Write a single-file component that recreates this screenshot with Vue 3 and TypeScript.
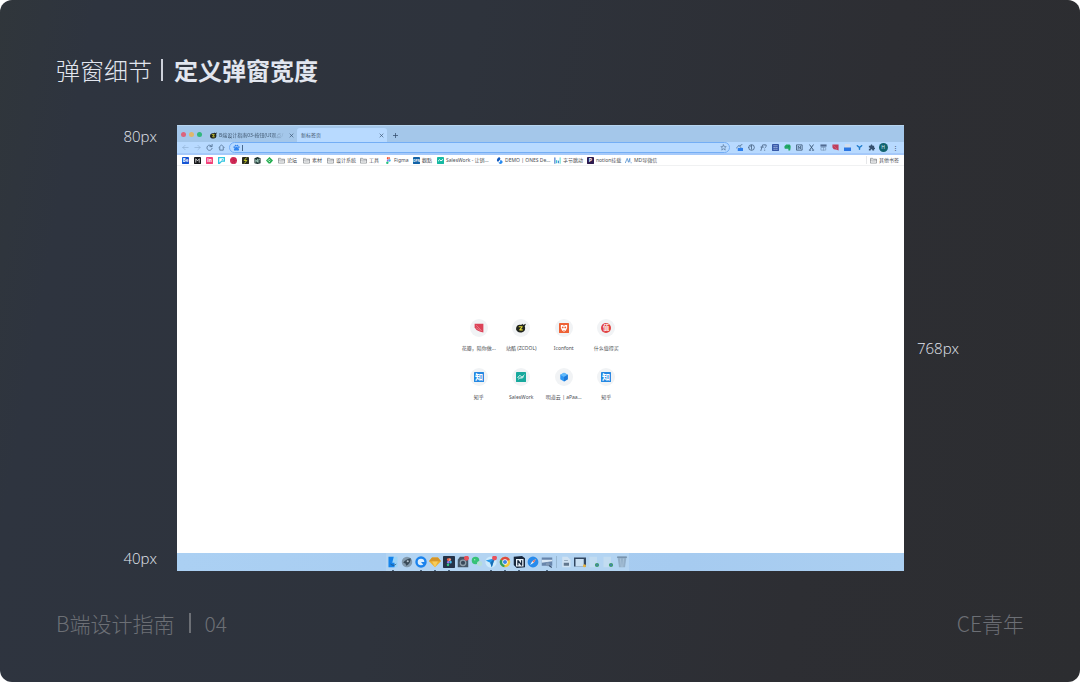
<script setup lang="ts">
import { h, ref } from 'vue'

interface Shape {
  d?: string
  fill?: string
  line?: string
  w?: number
  text?: string
  size?: number
}
type Art = Shape[]

const fillOf = (d: string, fill: string): Shape => ({ d, fill })
const lineOf = (d: string, line: string, w = 1.6): Shape => ({ d, line, w })
const box = (fill: string): Shape => fillOf('M1 0h14a1 1 0 0 1 1 1v14a1 1 0 0 1-1 1H1a1 1 0 0 1-1-1V1a1 1 0 0 1 1-1z', fill)
const disc = (fill: string, r = 8, cx = 8, cy = 8): Shape =>
  fillOf(`M${cx - r} ${cy}a${r} ${r} 0 1 0 ${2 * r} 0a${r} ${r} 0 1 0 ${-2 * r} 0z`, fill)
const word = (text: string, fill: string, size: number): Shape => ({ text, fill, size })

const Glyph = (props: { art: Art }) =>
  h(
    'svg',
    { viewBox: '0 0 16 16', 'aria-hidden': 'true' },
    props.art.map((s) =>
      s.text
        ? h('text', { x: 8, y: 8 + (s.size ?? 10) * 0.37, 'text-anchor': 'middle', 'font-size': s.size, 'font-weight': 700, fill: s.fill }, s.text)
        : h('path', {
            d: s.d,
            fill: s.fill ?? 'none',
            stroke: s.line ?? 'none',
            'stroke-width': s.w ?? 0,
            'stroke-linecap': 'round',
            'stroke-linejoin': 'round',
          }),
    ),
  )
Glyph.props = ['art']

const ink = '#4d6b8c'
const navy = '#35506f'

const zcool: Art = [
  fillOf('M0 10C0 4 4 2 8 3l3-2v2l5-2-2 4c2 6-1 10-7 10-4 0-6-2-7-5z', '#20241d'),
  lineOf('M5 6h5l-4 5h4', '#e5dc37', 1.8),
]
const back: Art = [lineOf('M14 8H2M7 3L2 8l5 5', '#8fb0d3', 1.5)]
const forward: Art = [lineOf('M2 8h12M9 3l5 5-5 5', '#8fb0d3', 1.5)]
const reload: Art = [lineOf('M13 5a6 6 0 1 0 1 5M14 1v5H9', ink, 1.8)]
const home: Art = [lineOf('M2 8l6-6 6 6M4 8v6h8V8', ink, 1.8)]
const star: Art = [lineOf('M8 2l2 4h4l-3 3 1 5-4-3-4 3 1-5-3-3h4z', ink, 1.3)]
const paw: Art = [
  disc('#2f83ef', 2, 2.8, 7), disc('#2f83ef', 2, 6, 3.5), disc('#2f83ef', 2, 10.2, 3.5), disc('#2f83ef', 2, 13.3, 7),
  fillOf('M8 6c3 0 3 3 5 4 2 3 0 6-3 5H6c-4 1-5-3-3-5 2-1 2-4 5-4z', '#2f83ef'),
]
const folder: Art = [
  lineOf('M1 13V3h5l2 2h7v8zM1 7h14', '#777b80', 1.5),
  lineOf('M4 10h8', '#a5a8ac', 1.2),
]
const close: Art = [lineOf('M3 3l10 10M13 3L3 13', '#344e6c', 2)]
const plus: Art = [lineOf('M8 1v14M1 8h14', '#344e6c', 2.4)]

interface Entry { name: string; label?: string; art: Art }

const bookmarks: Entry[] = [
  { name: 'Be', art: [box('#1756d4'), word('Be', '#fff', 10)] },
  { name: 'M', art: [box('#15171a'), lineOf('M4 12V4l4 5 4-5v8', '#fff', 1.6)] },
  { name: 'in', art: [box('#f2427a'), word('in', '#fff', 11)] },
  { name: 'P', art: [fillOf('M0 0h16v11H9l-5 5H0z', '#31c5df'), fillOf('M3 3h10v5H8l-4 4H3z', '#fff'), disc('#31c5df', 1.5, 10, 6)] },
  { name: 'Dribbble', art: [disc('#d52e5b'), lineOf('M2 6c5 1 9-1 11-3M5 15c1-6 5-8 10-7M5 1c4 4 5 8 6 14', '#ae173e', 1)] },
  { name: 'Z', art: [box('#282b20'), lineOf('M10 2L5 8h6l-5 6', '#e3e72c', 2)] },
  { name: 'N', art: [fillOf('M1 3L8 0l7 3v11l-7 2-7-2z', '#172e2c'), lineOf('M4 12V6l4 6V5M11 12V5h2', '#c7f4e2', 1.6)] },
  { name: 'Feedly', art: [fillOf('M8 0l8 8-6 7H6L0 8z', '#23ae50'), lineOf('M5 8l3-3M7 11l2-2', '#fff', 2)] },
  { name: '论坛', label: '论坛', art: folder },
  { name: '素材', label: '素材', art: folder },
  { name: '设计系统', label: '设计系统', art: folder },
  { name: '工具', label: '工具', art: folder },
  {
    name: 'Figma', label: 'Figma',
    art: [
      fillOf('M8 0H6a3 3 0 0 0 0 5.5h2z', '#ef4e2d'), fillOf('M8 0h2a3 3 0 0 1 0 5.5H8z', '#f77b65'),
      fillOf('M8 5.5H6a2.6 2.6 0 0 0 0 5h2z', '#9b58ed'), disc('#32b8ee', 2.6, 10.6, 8), fillOf('M8 10.5H6a2.7 2.7 0 1 0 2 3z', '#27c581'),
    ],
  },
  { name: '觀點', label: '觀點', art: [box('#1262a6'), word('OPN', '#fff', 7)] },
  { name: 'SalesWork', label: 'SalesWork - 让销...', art: [box('#17b9a3'), lineOf('M3 9l3-3 3 3 4-3', '#fff', 2.2)] },
  { name: 'ONES', label: 'DEMO | ONES De...', art: [fillOf('M7 0c3 2 4 4 2 6L5 11C0 9 2 4 7 0z', '#1158bd'), fillOf('M10 7c5 1 7 5 3 8-3 2-7 0-7-3h3z', '#268af1')] },
  { name: '字节跳动', label: '字节跳动', art: [lineOf('M2 2v12', '#3670c8', 2.5), lineOf('M6 8v5', '#2fc4d0', 2.5), lineOf('M10 9v4', '#3480d5', 2.5), lineOf('M14 2v12', '#61dcd6', 2.5)] },
  { name: 'notion', label: 'notion挂载', art: [box('#2d1b4e'), word('P', '#fff', 12)] },
  { name: 'MD', label: 'MD导微信', art: [lineOf('M1 13L5 3l3 9 3-9v8', '#3c82cc', 1.6), disc('#3c82cc', 1.2, 14, 13)] },
]

const extensions: Entry[] = [
  { name: '翻译', art: [lineOf('M1 9l6-6 4 5M9 4l5-3', ink, 1.8), fillOf('M4 9h12v7H4z', '#2e7fec')] },
  { name: '信息', art: [lineOf('M1.5 8a6.5 6.5 0 1 0 13 0a6.5 6.5 0 1 0-13 0M8 4v8M6 5l2-1', navy, 1.6)] },
  { name: '字体', art: [lineOf('M2 15L6 2h3M2 7h6M10 2h4v4l-3 3M10 14h1', navy, 1.5)] },
  { name: '列表', art: [box('#3759a8'), lineOf('M4 4h8M4 8h3M9 8h3M4 12h3M9 12h3', '#b7caed', 1.5)] },
  { name: '印象笔记', art: [fillOf('M1 5l4-4h6c5 0 5 5 3 14h-4v-4H4C1 11 1 9 1 5z', '#20a765'), disc('#165e4a', 1, 11, 6)] },
  { name: '截图', art: [lineOf('M2 2h12v12H2z', navy, 1.8), lineOf('M5 11V5l5 6V5', navy, 1.8)] },
  { name: '剪藏', art: [lineOf('M4 2l7 10M12 2L5 12M3 14h3M10 14h3', navy, 2)] },
  { name: '日历', art: [fillOf('M1 1h14v5H1z', '#526c92'), lineOf('M3 8h10v6H3zM8 8v6', '#7591b1', 1.4)] },
  { name: '花瓣', art: [fillOf('M1 1h14v14l-4-2-7-1-3-4z', '#bf3d5b'), lineOf('M4 4l7 7', '#d77f95', 1)] },
  { name: '清单', art: [fillOf('M2 0h12v9H2z', '#d2dceb'), fillOf('M0 8h16v8H0z', '#2b76e3')] },
  { name: '筛选', art: [lineOf('M3 4l5 4 5-4M8 8v4', '#1f7bca', 3.4)] },
  { name: '扩展程序', art: [fillOf('M2 4h4c-1-4 5-4 4 0h4v4c3 0 3 4 0 4v3h-4c0-4-4-4-4 0H2v-4c4 0 4-3 0-3z', navy)] },
]

const tabTitle = 'B端设计指南03-按钮(UI观点/'

const shortcuts: Entry[] = [
  { name: '花瓣', label: '花瓣，陪你做...', art: [fillOf('M1 1h14v14l-5-1-6-3-3-4z', '#dc4358'), lineOf('M4 4l8 8M4 8l6 4', '#ee9aa2', 1)] },
  { name: '站酷', label: '站酷 (ZCOOL)', art: zcool },
  {
    name: 'Iconfont', label: 'Iconfont',
    art: [box('#ee6135'), fillOf('M3 3h10v5l-2 4-3 2-3-2-2-4z', '#fff'), disc('#ee6135', 1.5, 6, 7), disc('#ee6135', 1.5, 10, 7), fillOf('M6 2h4L8 5zM6 11h4v1H6z', '#ee6135')],
  },
  { name: '什么值得买', label: '什么值得买', art: [disc('#e14040'), word('值', '#fff', 10)] },
  { name: '知乎', label: '知乎', art: [box('#2588e2'), word('知', '#fff', 13)] },
  { name: 'SalesWork', label: 'SalesWork', art: [box('#18a99d'), lineOf('M3 9c2-4 4-4 5-2s3 0 5-2M4 11c3-4 5 1 8-3', '#fff', 1.6)] },
  { name: '明道云', label: '明道云 | aPaa...', art: [fillOf('M8 1l6 3.5v7L8 15l-6-3.5v-7z', '#2e96f3'), fillOf('M8 1l6 3.5L8 8 2 4.5z', '#64bbfb'), fillOf('M8 8l6-3.5v7L8 15z', '#1d79d8')] },
  { name: '知乎专栏', label: '知乎', art: [box('#2588e2'), word('知', '#fff', 13)] },
]

const chromeArt: Art = [disc('#f0c83d', 7), fillOf('M8 8L2 4.5A7 7 0 0 1 14.5 5z', '#db4a3f'), fillOf('M8 8l-6-3.5A7 7 0 0 0 7 15z', '#2c9f60'), disc('#fff', 3.6), disc('#3e83e8', 2.7)]
const pageFile: Art = [fillOf('M2 1h10v14H2z', '#c2dcf1'), disc('#3a9c68', 2.8, 12, 12), disc('#487fbb', 1.3, 12, 12)]

interface DockItem { name: string; running?: boolean; art: Art }
const dock: DockItem[] = [
  { name: '访达', running: true, art: [fillOf('M2 1h12v14H2z', '#9bd3f7'), fillOf('M2 1h7L7 9h3v6H2z', '#1684eb'), lineOf('M5 11c2 2 5 2 7 0', '#17415f', 0.8)] },
  { name: '启动台', art: [disc('#8299ac', 7), fillOf('M13 3c-4 0-8 3-10 6l3 1 1 3c4-2 6-5 6-10z', '#394a57'), disc('#b4c2cd', 1.4, 9, 7)] },
  { name: 'Quark', running: true, art: [disc('#1b83ed', 7.6), disc('#d9edfe', 4.4), fillOf('M8 8h6l-1 6z', '#1b83ed')] },
  { name: 'Sketch', running: true, art: [fillOf('M4 2h8l4 5-8 8-8-8z', '#edb02e'), fillOf('M4 7h8l-4 8z', '#f7cc5b'), fillOf('M4 2h8l4 5H0z', '#d59529')] },
  {
    name: 'Figma', running: true,
    art: [box('#243348'), fillOf('M8 3H6.5a1.8 1.8 0 0 0 0 3.5H8z', '#ee6548'), fillOf('M8 3h1.5a1.8 1.8 0 0 1 0 3.5H8z', '#f59a81'), fillOf('M8 6.5H6.5a1.8 1.8 0 0 0 0 3.5H8z', '#9b72e9'), disc('#44b9ed', 1.7, 10, 8.2), disc('#37c582', 1.7, 6.7, 11.8)],
  },
  { name: '设置', art: [fillOf('M4 1h7l4 5v9H1V5z', '#455768'), disc('#8e9da9', 4.5, 8, 9), disc('#38495a', 2.8, 8, 9), disc('#e8525c', 3.3, 12.7, 3)] },
  { name: '微信', art: [disc('#35c276', 5, 6, 6), disc('#b5ddd8', 3.5, 11.5, 10), disc('#eafff4', 0.8, 5, 5)] },
  { name: '飞书', running: true, art: [disc('#cde9fb', 7.5), fillOf('M1 6l12-3-4 12-2-6z', '#2597e9'), fillOf('M7 9l6-6-4 12z', '#176bb4'), disc('#e8525c', 3.3, 12.7, 2.8)] },
  { name: 'Chrome', running: true, art: chromeArt },
  { name: 'Notion', running: true, art: [fillOf('M1 1l11-1 4 3v12l-11 1-4-4z', '#17263b'), fillOf('M4 4h10v10H4z', '#e8f2fa'), lineOf('M6.5 12V6l5 6V6', '#17263b', 1.6)] },
  { name: 'Safari', art: [disc('#288bec', 7.2), fillOf('M12 4L9 9 4 12l3-5z', '#e6f5ff'), fillOf('M12 4L9 9 7 7z', '#ed735e')] },
  { name: '预览', running: true, art: [fillOf('M1 2h14v11H1z', '#6785ab'), fillOf('M1 5h14v2L1 9z', '#d8e7f5'), disc('#8098b6', 2.6, 9, 11), lineOf('M11 13l3 2', '#3a5270', 1.4)] },
]
const dockFiles: DockItem[] = [
  { name: '文稿', art: [fillOf('M3 1h7l4 4v10H3z', '#cfe2f3'), fillOf('M5 9h7v4H5z', '#61778e'), lineOf('M6 6h4', '#8498ab', 1)] },
  { name: '屏幕', art: [fillOf('M0 2h16v12H0z', '#314762'), fillOf('M2 4h11v10H2z', '#c9dff2'), disc('#eab53f', 2, 14, 13)] },
  { name: '网页', art: pageFile },
  { name: '下载', art: pageFile },
  { name: '废纸篓', art: [fillOf('M2 1h12l-2 14H4z', '#93afc8'), lineOf('M2 1.5h12', '#708ba5', 1.5), lineOf('M6 4l1 10M10 4L9 14', '#b6cfe3', 0.8)] },
]

const address = ref('')
</script>

<template>
  <main class="slide">
    <h1 class="title"><span>弹窗细节</span><i class="bar"></i><strong>定义弹窗宽度</strong></h1>

    <section class="stage">
      <div class="marks left"><span>80px</span><span>40px</span></div>

      <div class="screen">
        <div class="tabs">
          <div class="lights"><i class="red"></i><i class="amber"></i><i class="green"></i></div>
          <div class="tab">
            <Glyph :art="zcool" class="icon" />
            <span class="tab-title fade">{{ tabTitle }}</span>
            <button class="mini" aria-label="关闭标签页"><Glyph :art="close" /></button>
          </div>
          <div class="tab active">
            <span class="tab-title">新标签页</span>
            <button class="mini" aria-label="关闭新标签页"><Glyph :art="close" /></button>
          </div>
          <button class="mini add" aria-label="打开新标签页"><Glyph :art="plus" /></button>
        </div>

        <div class="toolbar">
          <div class="nav">
            <button class="tool" aria-label="后退"><Glyph :art="back" class="icon" /></button>
            <button class="tool" aria-label="前进"><Glyph :art="forward" class="icon" /></button>
            <button class="tool" aria-label="重新加载"><Glyph :art="reload" class="icon" /></button>
            <button class="tool" aria-label="主页"><Glyph :art="home" class="icon" /></button>
          </div>
          <div class="address">
            <Glyph :art="paw" class="icon" />
            <i class="caret"></i>
            <input v-model="address" type="text" aria-label="地址栏" />
            <button class="tool" aria-label="收藏"><Glyph :art="star" class="icon" /></button>
          </div>
          <div class="nav extensions">
            <button v-for="e in extensions" :key="e.name" class="tool" :aria-label="e.name"><Glyph :art="e.art" class="icon" /></button>
            <button class="tool" aria-label="账户"><span class="avatar">H</span></button>
            <button class="tool dots" aria-label="菜单">⋮</button>
          </div>
        </div>

        <nav class="bookmarks">
          <a v-for="b in bookmarks" :key="b.name" href="#" class="bookmark" :aria-label="b.name">
            <Glyph :art="b.art" class="icon" /><span v-if="b.label">{{ b.label }}</span>
          </a>
          <a href="#" class="bookmark other"><Glyph :art="folder" class="icon" /><span>其他书签</span></a>
        </nav>

        <div class="page">
          <div class="shortcuts">
            <a v-for="s in shortcuts" :key="s.name" href="#" class="shortcut">
              <span class="round"><Glyph :art="s.art" /></span>
              <span class="caption">{{ s.label }}</span>
            </a>
          </div>
        </div>

        <div class="dock">
          <div class="shelf">
            <button v-for="d in dock" :key="d.name" class="app" :class="{ running: d.running }" :aria-label="d.name"><Glyph :art="d.art" /></button>
            <i class="divider"></i>
            <button v-for="d in dockFiles" :key="d.name" class="app" :aria-label="d.name"><Glyph :art="d.art" /></button>
          </div>
        </div>
      </div>

      <div class="marks right"><span>768px</span></div>
    </section>

    <footer class="foot">
      <p>B端设计指南<i class="bar"></i>04</p>
      <p>CE青年</p>
    </footer>
  </main>
</template>

<style>
body {
  background: #fff;
}
</style>

<style scoped>
* {
  box-sizing: border-box;
}
.slide {
  display: flex;
  flex-direction: column;
  min-height: 100vh;
  border-radius: 12px;
  background: linear-gradient(100deg, #30363b 0%, #2e343f 8%, #2e333c 40%, #2d2e33 75%, #2c2d30 100%);
  color: #e2e6ef;
  font-family: "Noto Sans", "Noto Sans CJK SC", sans-serif;
  overflow: hidden;
}
.title {
  display: flex;
  align-items: center;
  height: 125px;
  margin: 0;
  padding: 14px 56px 0;
  font: 300 24px/36px "Noto Sans CJK SC", sans-serif;
}
.title .bar {
  width: 2px;
  height: 22px;
  margin: 0 11px 0 9px;
  background: #cdd1da;
}
.title strong {
  font-weight: 700;
}
.stage {
  display: grid;
  grid-template-columns: 177px 1fr 176px;
  flex: 1;
}
.marks {
  display: flex;
  flex-direction: column;
  font: 300 15px/22px "Open Sans", "Noto Sans", sans-serif;
}
.left {
  justify-content: space-between;
  align-items: flex-end;
  padding: 0 20px 2px 0;
}
.right {
  justify-content: center;
  padding-left: 13px;
}
.screen {
  display: flex;
  flex-direction: column;
  min-width: 0;
  background: #fff;
  color: #4a4d52;
  font: 400 5px/8px "Noto Sans", "Noto Sans CJK SC", sans-serif;
}
button {
  display: grid;
  place-items: center;
  padding: 0;
  border: 0;
  background: none;
  color: inherit;
  font: inherit;
}
a {
  color: inherit;
  text-decoration: none;
}
svg {
  display: block;
  flex: none;
  font-family: "Noto Sans", "Noto Sans CJK SC", sans-serif;
}
.icon {
  width: 7px;
  height: 7px;
}
.tabs {
  display: flex;
  align-items: flex-end;
  height: 17px;
  border-top: 1px solid #b7d5ef;
  background: #a4c7ea;
  color: #3e566f;
}
.lights {
  display: flex;
  align-items: center;
  gap: 3px;
  width: 33px;
  height: 16px;
  padding-left: 4px;
}
.lights i {
  width: 5px;
  height: 5px;
  border-radius: 50%;
}
.red { background: #dc647d; }
.amber { background: #dfb76c; }
.green { background: #31b77d; }
.tab {
  display: flex;
  align-items: center;
  gap: 2px;
  width: 87px;
  height: 14px;
  padding-right: 3px;
}
.tab-title {
  flex: 1;
  white-space: nowrap;
}
.fade {
  mask-image: linear-gradient(90deg, #000 75%, transparent);
}
.active {
  width: 90px;
  padding-left: 4px;
  border-radius: 3px 3px 0 0;
  background: #b8daff;
}
.mini,
.mini svg {
  width: 5px;
  height: 5px;
}
.add {
  align-self: center;
  margin: 2px 0 0 6px;
}
.toolbar {
  display: flex;
  align-items: center;
  height: 13px;
  border-bottom: 2px solid #a5c9fa;
  background: #b8daff;
  color: #35506f;
}
.nav {
  display: flex;
  padding: 0 2px;
}
.extensions {
  padding-right: 3px;
}
.tool {
  width: 12px;
  height: 10px;
}
.avatar {
  width: 9px;
  height: 9px;
  border-radius: 50%;
  background: #12646f;
  color: #d7edf0;
  text-align: center;
}
.dots {
  font-weight: 700;
}
.address {
  display: flex;
  flex: 1;
  align-items: center;
  height: 11px;
  margin-right: 1px;
  padding-left: 3px;
  border: 1px solid #74aef5;
  border-radius: 6px;
}
.address input {
  flex: 1;
  min-width: 0;
  height: 8px;
  padding: 0 2px;
  border: 0;
  outline: 0;
  background: none;
  font: inherit;
}
.caret {
  width: 1px;
  height: 6px;
  margin-left: 2px;
  background: #47698f;
}
.bookmarks {
  display: grid;
  grid-template-columns: repeat(8, 12px) 25px 24px 33px 25px 28px 24px 59px 58px 33px 38px 1fr auto;
  align-items: center;
  height: 11px;
  padding: 0 5px;
  border-bottom: 1px solid #f0f1f2;
}
.bookmark {
  display: flex;
  align-items: center;
  gap: 2px;
  white-space: nowrap;
}
.other {
  padding-left: 3px;
  border-left: 1px solid #e6e7e9;
}
.page {
  display: grid;
  flex: 1;
  place-items: center;
  padding: 1px 0 0 4px;
}
.shortcuts {
  display: grid;
  grid-template-columns: repeat(4, 1fr);
  row-gap: 16px;
  width: 170px;
}
.shortcut {
  display: flex;
  flex-direction: column;
  align-items: center;
  gap: 7px;
  white-space: nowrap;
}
.round {
  display: grid;
  place-items: center;
  width: 18px;
  height: 18px;
  border-radius: 50%;
  background: #f1f3f5;
}
.round svg {
  width: 10px;
  height: 10px;
}
.dock {
  display: flex;
  justify-content: center;
  height: 18px;
  padding-right: 66px;
  background: linear-gradient(90deg, #abd0f3, #a6cbf0 70%, #abcff1);
}
.shelf {
  display: flex;
  align-items: center;
  background: #b3d4f2;
}
.app {
  position: relative;
  width: 14px;
  height: 18px;
  padding-bottom: 1px;
}
.app svg {
  width: 12px;
  height: 12px;
}
.running::after {
  content: "";
  position: absolute;
  bottom: 0;
  width: 2px;
  height: 1px;
  background: #4a6580;
}
.divider {
  width: 1px;
  height: 12px;
  margin: 0 2px;
  background: #98b8d3;
}
.foot {
  display: flex;
  justify-content: space-between;
  align-items: center;
  height: 111px;
  padding: 0 56px 8px;
  color: #6c6f75;
  font: 300 21px/32px "Noto Sans CJK SC", sans-serif;
}
.foot p {
  display: flex;
  align-items: center;
  margin: 0;
}
.foot .bar {
  width: 2px;
  height: 20px;
  margin: 0 13px 0 15px;
  background: #6c6f75;
}
</style>
